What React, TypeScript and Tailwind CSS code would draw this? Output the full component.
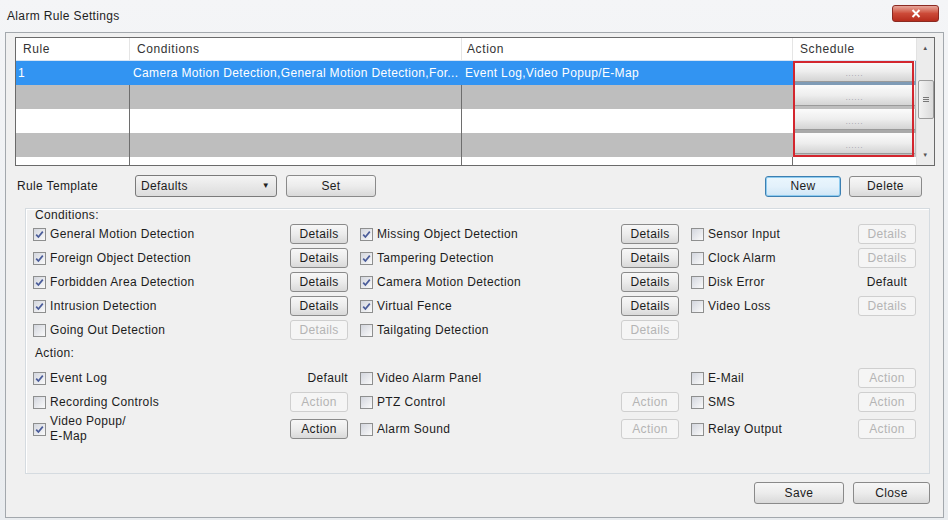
import React from "react";

type BtnKind = "on" | "off" | "default" | "none";

const Check = ({ checked }: { checked: boolean }) => (
  <span className="w-[13px] h-[13px] shrink-0 border border-[#8e8f8f] bg-linear-to-br from-[#d3d6de] to-[#fafafa] flex items-center justify-center">
    {checked && (
      <svg width="9" height="9" viewBox="0 0 9 9">
        <path d="M1.2 4.6 L3.4 7 L7.8 1.6" stroke="#4a5c9a" strokeWidth="1.7" fill="none" />
      </svg>
    )}
  </span>
);

const Button = ({
  label,
  kind = "on",
  className = "",
}: {
  label: string;
  kind?: "on" | "off" | "primary";
  className?: string;
}) => {
  const styles = {
    on: "border-[#8a8a8a] bg-linear-to-b from-[#f7f7f7] via-[#ececec] to-[#d9d9d9] text-[#1c1c1c]",
    off: "border-[#cfcfcf] bg-[#f5f5f5] text-[#b4b4b4]",
    primary:
      "border-[#3c7fb1] bg-linear-to-b from-[#eaf6fd] via-[#e3f1fb] to-[#cfe6f6] text-[#1c1c1c] shadow-[inset_0_0_0_1px_#8ecbef]",
  };
  return (
    <button
      className={`flex items-center justify-center rounded-[3px] border text-[12px] leading-none ${styles[kind]} ${className}`}>
      {label}
    </button>
  );
};

const SideButton = ({ kind, text, col }: { kind: BtnKind; text: string; col: number }) => {
  if (kind === "none") return <div />;
  if (kind === "default")
    return (
      <div className={`${col === 0 ? "text-right" : "text-center"} text-[12px] text-[#1c1c1c]`}>
        Default
      </div>
    );
  return <Button label={text} kind={kind} className="w-[58px] h-[20px]" />;
};

type Cell = { label: string; checked: boolean; btn: BtnKind };

const conditions: Cell[][] = [
  [
    { label: "General Motion Detection", checked: true, btn: "on" },
    { label: "Missing Object Detection", checked: true, btn: "on" },
    { label: "Sensor Input", checked: false, btn: "off" },
  ],
  [
    { label: "Foreign Object Detection", checked: true, btn: "on" },
    { label: "Tampering Detection", checked: true, btn: "on" },
    { label: "Clock Alarm", checked: false, btn: "off" },
  ],
  [
    { label: "Forbidden Area Detection", checked: true, btn: "on" },
    { label: "Camera Motion Detection", checked: true, btn: "on" },
    { label: "Disk Error", checked: false, btn: "default" },
  ],
  [
    { label: "Intrusion Detection", checked: true, btn: "on" },
    { label: "Virtual Fence", checked: true, btn: "on" },
    { label: "Video Loss", checked: false, btn: "off" },
  ],
  [
    { label: "Going Out Detection", checked: false, btn: "off" },
    { label: "Tailgating Detection", checked: false, btn: "off" },
    { label: "", checked: false, btn: "none" },
  ],
];

const actions: Cell[][] = [
  [
    { label: "Event Log", checked: true, btn: "default" },
    { label: "Video Alarm Panel", checked: false, btn: "none" },
    { label: "E-Mail", checked: false, btn: "off" },
  ],
  [
    { label: "Recording Controls", checked: false, btn: "off" },
    { label: "PTZ Control", checked: false, btn: "off" },
    { label: "SMS", checked: false, btn: "off" },
  ],
  [
    { label: "Video Popup/\nE-Map", checked: true, btn: "on" },
    { label: "Alarm Sound", checked: false, btn: "off" },
    { label: "Relay Output", checked: false, btn: "off" },
  ],
];

const OptionRow = ({
  cells,
  text,
  tall,
}: {
  cells: Cell[];
  text: string;
  tall?: boolean;
}) => (
  <div
    className={`grid grid-cols-[257px_58px_273px_58px_179px_58px] items-center ${
      tall ? "h-[30px]" : "h-[24px]"
    }`}>
    {cells.map((c, i) => (
      <React.Fragment key={i}>
        <div className={`flex items-center gap-[4px] ${i > 0 ? "pl-[12px]" : ""}`}>
          {c.label && <Check checked={c.checked} />}
          <span className="whitespace-pre-line leading-[15px] text-[#1c1c1c]">{c.label}</span>
        </div>
        <SideButton kind={c.btn} text={text} col={i} />
      </React.Fragment>
    ))}
  </div>
);

const rows = [
  {
    rule: "1",
    cond: "Camera Motion Detection,General Motion Detection,For...",
    action: "Event Log,Video Popup/E-Map",
    bg: "bg-[#3294f2] text-white",
    line: "border-[#3294f2]",
    strip: "bg-[#7f9bb6]",
  },
  { rule: "", cond: "", action: "", bg: "bg-[#bebebe]", line: "border-[#6e6e6e]", strip: "bg-[#bebebe]" },
  { rule: "", cond: "", action: "", bg: "bg-white", line: "border-[#6e6e6e]", strip: "bg-[#a9a9a9]" },
  { rule: "", cond: "", action: "", bg: "bg-[#bebebe]", line: "border-[#6e6e6e]", strip: "bg-[#bebebe]" },
];

export default function App() {
  return (
    <div className="w-[948px] h-[520px] flex flex-col bg-linear-to-b from-[#f4f5f7] to-[#e9ecef] font-['Liberation_Sans',Arial,sans-serif] text-[12px] tracking-[0.35px] text-[#1c1c1c] overflow-hidden">
      {/* Title bar */}
      <div className="h-[32px] flex items-start shrink-0">
        <div className="pl-[7px] pt-[7px] text-[12px] text-[#1e1e1e]">Alarm Rule Settings</div>
        <button className="ml-auto mt-[5px] mr-[9px] w-[47px] h-[17px] rounded-[3px] border border-[#8b2a22] bg-linear-to-b from-[#e6a69b] via-[#cc4a38] to-[#b62b1c] flex items-center justify-center">
          <svg width="10" height="9" viewBox="0 0 10 9">
            <path d="M1.5 1 L8.5 8 M8.5 1 L1.5 8" stroke="white" strokeWidth="2" />
          </svg>
        </button>
      </div>

      {/* Dialog body */}
      <div className="flex-1 mb-[2px] ml-[5px] mr-[4px] border border-[#a3a8ad] bg-[#f0f0f0] flex flex-col">
        {/* Rules table */}
        <div className="mt-[4px] ml-[9px] w-[920px] h-[129px] border border-[#6a6a6a] bg-white flex">
          <div className="flex-1 flex flex-col">
            <div className="h-[23px] flex items-center border-b border-[#d6e5f5] text-[#333] tracking-[0.6px]">
              <div className="w-[114px] h-full pl-[7px] flex items-center border-r border-[#e5e5e5]">Rule</div>
              <div className="w-[332px] h-full pl-[7px] flex items-center border-r border-[#e5e5e5]">Conditions</div>
              <div className="w-[331px] h-full pl-[5px] flex items-center border-r border-[#e5e5e5]">Action</div>
              <div className="flex-1 h-full pl-[7px] flex items-center">Schedule</div>
            </div>
            <div className="relative flex-1 flex flex-col">
              {rows.map((r, i) => (
                <div key={i} className={`h-[24px] flex ${r.bg}`}>
                  <div className={`w-[114px] pl-[2px] flex items-center border-r ${r.line}`}>{r.rule}</div>
                  <div className={`w-[332px] pl-[3px] flex items-center border-r whitespace-nowrap overflow-hidden ${r.line}`}>
                    {r.cond}
                  </div>
                  <div className={`w-[331px] pl-[3px] flex items-center ${r.line}`}>{r.action}</div>
                  <div className={`flex-1 flex flex-col ${r.strip}`}>
                    <div className="h-[21px] mx-[1px] border-b border-[#9a9a9a] bg-linear-to-b from-[#fbfbfb] via-[#eeeeee] to-[#d4d4d4] flex items-end justify-center pb-[4px] text-[7px] leading-none tracking-[1px] text-[#8c8c9a]">
                      ......
                    </div>
                  </div>
                </div>
              ))}
              <div className="flex-1 flex bg-white">
                <div className="w-[114px] border-r border-[#6e6e6e]" />
                <div className="w-[332px] border-r border-[#6e6e6e]" />
                <div className="w-[331px] border-r border-[#6e6e6e]" />
              </div>
              <div className="absolute left-[777px] top-0 w-[121px] h-[96px] border-2 border-[#d3262e]" />
            </div>
          </div>
          {/* Scrollbar */}
          <div className="w-[18px] bg-[#ececec] border-l border-[#e2e2e2] flex flex-col items-center">
            <div className="h-[20px] flex items-center justify-center text-[6px] text-[#555]">▲</div>
            <div className="mt-[22px] w-[16px] h-[39px] rounded-[2px] border border-[#9b9b9b] bg-linear-to-r from-[#f3f3f3] to-[#dadada] flex flex-col items-center justify-center gap-[1px]">
              <div className="w-[6px] h-[1px] bg-[#777]" />
              <div className="w-[6px] h-[1px] bg-[#777]" />
              <div className="w-[6px] h-[1px] bg-[#777]" />
            </div>
            <div className="mt-auto h-[20px] flex items-center justify-center text-[6px] text-[#555]">▼</div>
          </div>
        </div>

        {/* Rule template row */}
        <div className="mt-[9px] h-[22px] flex items-center">
          <div className="w-[129px] pl-[11px]">Rule Template</div>
          <div className="w-[142px] h-[22px] rounded-[3px] border border-[#7a7a7a] bg-linear-to-b from-[#f4f4f4] to-[#dcdcdc] flex items-center pl-[5px] pr-[6px]">
            <span>Defaults</span>
            <span className="ml-auto text-[8px] text-[#222]">▼</span>
          </div>
          <Button label="Set" className="ml-[9px] w-[90px] h-[22px]" />
          <Button label="New" kind="primary" className="ml-auto w-[76px] h-[21px]" />
          <Button label="Delete" className="ml-[8px] mr-[21px] w-[73px] h-[21px]" />
        </div>

        {/* Conditions / Action group */}
        <div className="mt-[11px] ml-[19px] w-[905px] h-[266px] border border-[#d5dbe0] shadow-[inset_1px_1px_0_#ffffff] pl-[7px] flex flex-col">
          <div className="h-[13px] leading-[13px] pl-[2px]">Conditions:</div>
          {conditions.map((r, i) => (
            <OptionRow key={i} cells={r} text="Details" />
          ))}
          <div className="h-[24px] pt-[4px] leading-[14px] pl-[2px]">Action:</div>
          {actions.map((r, i) => (
            <OptionRow key={i} cells={r} text="Action" tall={i === 2} />
          ))}
        </div>

        {/* Footer */}
        <div className="mt-[8px] flex justify-end gap-[9px] mr-[13px]">
          <Button label="Save" className="w-[90px] h-[22px]" />
          <Button label="Close" className="w-[77px] h-[22px]" />
        </div>
      </div>
    </div>
  );
}
